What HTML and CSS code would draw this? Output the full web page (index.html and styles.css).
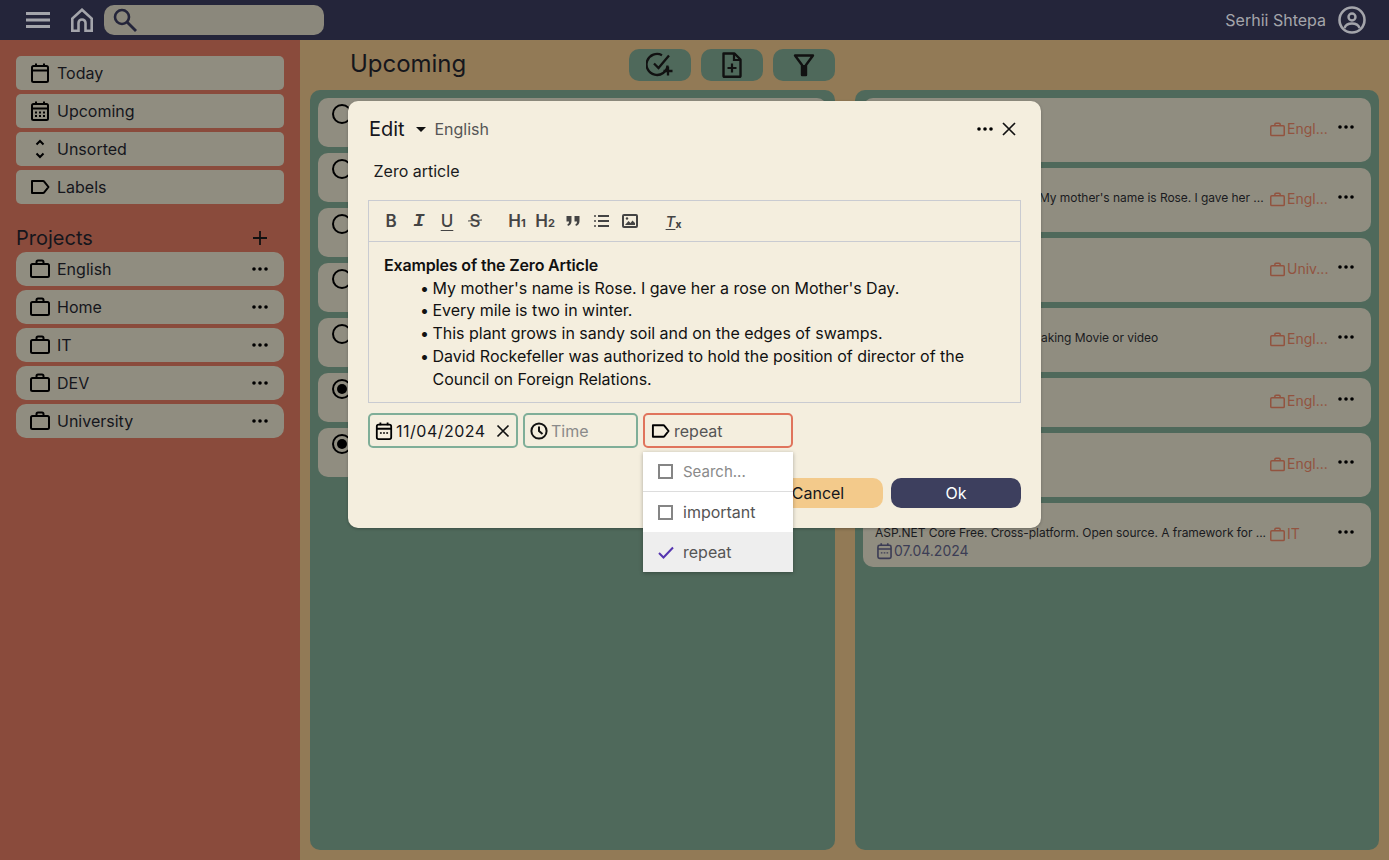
FILE: index.html
```html
<!DOCTYPE html>
<html lang="en">
<head>
<meta charset="utf-8">
<title>Upcoming</title>
<link rel="stylesheet" href="styles.css">
</head>
<body>
<svg class="sprite" aria-hidden="true">
  <symbol id="cal" viewBox="0 0 20 22"><rect x="2" y="4" width="16" height="16" rx="1.500" fill="none" stroke="currentColor" stroke-width="2"/><path d="M2 8.500h16M6 1.500v3M14 1.500v3" fill="none" stroke="currentColor" stroke-width="2"/></symbol>
  <symbol id="cal-dots" viewBox="0 0 20 22"><rect x="2" y="4" width="16" height="16" rx="1.500" fill="none" stroke="currentColor" stroke-width="2"/><path d="M2 8.500h16M6 1.500v3M14 1.500v3" fill="none" stroke="currentColor" stroke-width="2"/><path d="M5 11.500h2v2H5zM9 11.500h2v2H9zM13 11.500h2v2h-2zM5 15h2v2H5zM9 15h2v2H9zM13 15h2v2h-2z" fill="currentColor"/></symbol>
  <symbol id="cal-row" viewBox="0 0 20 22"><rect x="2" y="4" width="16" height="16" rx="2" fill="none" stroke="currentColor" stroke-width="2"/><path d="M2 8.500h16M6 1.500v3M14 1.500v3" fill="none" stroke="currentColor" stroke-width="2"/><path d="M5.500 12.500h2v1.600h-2zM9 12.500h2v1.600H9zM12.500 12.500h2v1.600h-2z" fill="currentColor"/></symbol>
  <symbol id="brief" viewBox="0 0 20 20"><rect x="1" y="5" width="18" height="13" rx="1.500" fill="none" stroke="currentColor" stroke-width="2"/><path d="M6.500 5V3a1.500 1.500 0 0 1 1.500-1.500h4A1.500 1.500 0 0 1 13.500 3v2" fill="none" stroke="currentColor" stroke-width="2"/></symbol>
  <symbol id="tag" viewBox="0 0 20 14"><path d="M2 1h11a1.500 1.500 0 0 1 1.200.6L18.500 7l-4.300 5.400a1.500 1.500 0 0 1-1.200.6H2z" fill="none" stroke="currentColor" stroke-width="2" stroke-linejoin="round"/></symbol>
  <symbol id="dots" viewBox="0 0 16 4"><circle cx="2" cy="2" r="1.800" fill="currentColor"/><circle cx="8" cy="2" r="1.800" fill="currentColor"/><circle cx="14" cy="2" r="1.800" fill="currentColor"/></symbol>
  <symbol id="box" viewBox="0 0 15 15"><rect x="1" y="1" width="13" height="13" fill="none" stroke="#858585" stroke-width="2"/></symbol>
</svg>

<header class="topbar">
  <svg class="burger" viewBox="0 0 24 16"><path d="M0 1.500h24M0 8h24M0 14.500h24" stroke="#a4a5ab" stroke-width="3"/></svg>
  <svg class="home" viewBox="0 0 22 24"><path d="M11 1.700 1.300 10.500V22.700H7.500V15a3.500 3.500 0 0 1 7 0V22.700H20.700V10.500Z" fill="none" stroke="#a4a5ab" stroke-width="2.600"/></svg>
  <div class="search">
    <svg class="search-icon" viewBox="0 0 24 24"><circle cx="9" cy="9" r="7" fill="none" stroke="#24253a" stroke-width="2.600"/><path d="M14 14l9 9" stroke="#24253a" stroke-width="2.800"/></svg>
  </div>
  <div class="user">
    <span>Serhii Shtepa</span>
    <svg class="avatar" viewBox="0 0 28 28"><circle cx="14" cy="14" r="12.500" fill="none" stroke="#a4a5ab" stroke-width="2.600"/><circle cx="14" cy="11" r="3.500" fill="none" stroke="#a4a5ab" stroke-width="2.400"/><path d="M6.500 22c1-3 4-4.500 7.500-4.500s6.500 1.500 7.500 4.500" fill="none" stroke="#a4a5ab" stroke-width="2.400"/></svg>
  </div>
</header>

<div class="shell">
  <aside class="sidebar">
    <nav class="nav">
      <a class="nav-item"><svg class="ico"><use href="#cal"/></svg>Today</a>
      <a class="nav-item"><svg class="ico"><use href="#cal-dots"/></svg>Upcoming</a>
      <a class="nav-item"><svg class="ico" viewBox="0 0 20 22"><path d="M6.500 6.500 10 3l3.500 3.500M6.500 15.500 10 19l3.500-3.500" fill="none" stroke="currentColor" stroke-width="2"/></svg>Unsorted</a>
      <a class="nav-item"><svg class="ico"><use href="#tag"/></svg>Labels</a>
    </nav>
    <div class="projects-head">
      <span>Projects</span>
      <svg class="plus" viewBox="0 0 16 16"><path d="M8 1v14M1 8h14" stroke="#111" stroke-width="1.800"/></svg>
    </div>
    <div class="nav">
      <a class="nav-item round"><svg class="ico"><use href="#brief"/></svg><span class="grow">English</span><svg class="dots"><use href="#dots"/></svg></a>
      <a class="nav-item round"><svg class="ico"><use href="#brief"/></svg><span class="grow">Home</span><svg class="dots"><use href="#dots"/></svg></a>
      <a class="nav-item round"><svg class="ico"><use href="#brief"/></svg><span class="grow">IT</span><svg class="dots"><use href="#dots"/></svg></a>
      <a class="nav-item round"><svg class="ico"><use href="#brief"/></svg><span class="grow">DEV</span><svg class="dots"><use href="#dots"/></svg></a>
      <a class="nav-item round"><svg class="ico"><use href="#brief"/></svg><span class="grow">University</span><svg class="dots"><use href="#dots"/></svg></a>
    </div>
  </aside>

  <main class="main">
    <div class="title-row">
      <h1 class="title">Upcoming</h1>
      <div class="tools">
        <button class="tool"><svg viewBox="0 0 28 26"><path d="M21.500 13.500A10.500 10.500 0 1 1 16 3.200" fill="none" stroke="#111" stroke-width="2.300"/><path d="M8 11.500l4.500 4.500L23 3.500" fill="none" stroke="#111" stroke-width="2.300"/><path d="M22 14.500v9M17.500 19h9" stroke="#111" stroke-width="2.300"/></svg></button>
        <button class="tool"><svg viewBox="0 0 28 26"><path d="M5.500 1.500h11l6 6V24a.8.800 0 0 1-.8.800H6.300a.8.800 0 0 1-.8-.8z" fill="none" stroke="#111" stroke-width="2.400" stroke-linejoin="round"/><path d="M16 1.500V8h6.500" fill="none" stroke="#111" stroke-width="2.200"/><path d="M14 11.500v9M9.500 16h9" stroke="#111" stroke-width="2.200"/></svg></button>
        <button class="tool"><svg viewBox="0 0 28 26"><path d="M5 3.500h18l-7 9.500v10h-4V13z" fill="none" stroke="#111" stroke-width="2.400" stroke-linejoin="round"/><path d="M12 13h4v10h-4z" fill="#111"/></svg></button>
      </div>
    </div>
    <div class="columns">
      <section class="column">
        <div class="task"><span class="radio"></span></div>
        <div class="task"><span class="radio"></span></div>
        <div class="task"><span class="radio"></span></div>
        <div class="task"><span class="radio"></span></div>
        <div class="task"><span class="radio"></span></div>
        <div class="task"><span class="radio on"></span></div>
        <div class="task"><span class="radio on"></span></div>
      </section>
      <section class="column">
        <div class="note tall"><p class="note-text"></p><span class="proj"><svg class="proj-ico"><use href="#brief"/></svg>Engl...</span><svg class="dots"><use href="#dots"/></svg></div>
        <div class="note tall"><p class="note-text"><span class="shift-rose">My mother's name is Rose. I gave her ...</span></p><span class="proj"><svg class="proj-ico"><use href="#brief"/></svg>Engl...</span><svg class="dots"><use href="#dots"/></svg></div>
        <div class="note tall"><p class="note-text"></p><span class="proj"><svg class="proj-ico"><use href="#brief"/></svg>Univ...</span><svg class="dots"><use href="#dots"/></svg></div>
        <div class="note tall"><p class="note-text"><span class="shift-movie">aking Movie or video</span></p><span class="proj"><svg class="proj-ico"><use href="#brief"/></svg>Engl...</span><svg class="dots"><use href="#dots"/></svg></div>
        <div class="note short"><p class="note-text"></p><span class="proj"><svg class="proj-ico"><use href="#brief"/></svg>Engl...</span><svg class="dots"><use href="#dots"/></svg></div>
        <div class="note tall"><p class="note-text"></p><span class="proj"><svg class="proj-ico"><use href="#brief"/></svg>Engl...</span><svg class="dots"><use href="#dots"/></svg></div>
        <div class="note tall">
          <div class="note-body">
            <p class="note-text">ASP.NET Core Free. Cross-platform. Open source. A framework for ...</p>
            <div class="note-date"><svg class="date-ico"><use href="#cal-row"/></svg>07.04.2024</div>
          </div>
          <span class="proj"><svg class="proj-ico"><use href="#brief"/></svg>IT</span><svg class="dots"><use href="#dots"/></svg>
        </div>
      </section>
    </div>
  </main>
</div>

<div class="modal">
  <div class="modal-head">
    <span class="modal-title">Edit</span>
    <svg class="caret" viewBox="0 0 10 5"><path d="M0 0h10L5 5z" fill="#111"/></svg>
    <span class="modal-project">English</span>
    <svg class="dots modal-dots"><use href="#dots"/></svg>
    <svg class="close" viewBox="0 0 14 14"><path d="M1 1l12 12M13 1 1 13" stroke="#111" stroke-width="1.700"/></svg>
  </div>
  <div class="modal-name">Zero article</div>
  <div class="editor">
    <div class="toolbar">
      <span class="tb tb-b">B</span>
      <span class="tb tb-i">I</span>
      <span class="tb tb-u">U</span>
      <span class="tb tb-s">S</span>
      <span class="tb tb-h first-h">H<small>1</small></span>
      <span class="tb tb-h">H<small>2</small></span>
      <span class="tb"><svg viewBox="0 0 18 18"><path d="M2.500 4h5v5c0 2.700-1.300 4.300-3.500 5l-.7-1.500C4.500 12 5 11 5 9.500H2.500zM10.500 4h5v5c0 2.700-1.300 4.300-3.500 5l-.7-1.500c1.200-.5 1.700-1.500 1.700-3h-2.500z" fill="#444"/></svg></span>
      <span class="tb"><svg viewBox="0 0 18 18"><path d="M6 4h11M6 9h11M6 14h11" stroke="#444" stroke-width="2"/><path d="M2 3.200h2v1.600H2zM2 8.200h2v1.600H2zM2 13.200h2v1.600H2z" fill="#444"/></svg></span>
      <span class="tb"><svg viewBox="0 0 18 18"><rect x="3" y="3" width="14" height="12" rx="1" fill="none" stroke="#444" stroke-width="2"/><path d="M5 13l3.500-4 2 2 2-2.500L15 11v2z" fill="#444"/><circle cx="7" cy="6.500" r="1.200" fill="#444"/></svg></span>
      <span class="tb tb-clean"><span class="tb-t">T</span><span class="tb-x">x</span></span>
    </div>
    <div class="editor-body">
      <p class="editor-h">Examples of the Zero Article</p>
      <ul class="editor-list">
        <li>My mother's name is Rose. I gave her a rose on Mother's Day.</li>
        <li>Every mile is two in winter.</li>
        <li>This plant grows in sandy soil and on the edges of swamps.</li>
        <li>David Rockefeller was authorized to hold the position of director of the Council on Foreign Relations.</li>
      </ul>
    </div>
  </div>
  <div class="fields">
    <div class="field field-date"><svg class="f-ico"><use href="#cal-row"/></svg><span class="f-val date-val">11/04/2024</span><svg class="f-x" viewBox="0 0 14 14"><path d="M1.500 1.500l11 11M12.500 1.500l-11 11" stroke="#111" stroke-width="1.700"/></svg></div>
    <div class="field field-time"><svg class="f-clock" viewBox="0 0 18 18"><circle cx="9" cy="9" r="7.600" fill="none" stroke="#111" stroke-width="2"/><path d="M9 4.500V9l3.500 3" fill="none" stroke="#111" stroke-width="2"/></svg><span class="f-ph">Time</span></div>
    <div class="field field-label"><svg class="f-tag"><use href="#tag"/></svg><span class="f-sel">repeat</span></div>
  </div>
  <div class="actions">
    <button class="btn btn-cancel">Cancel</button>
    <button class="btn btn-ok">Ok</button>
  </div>
  <div class="menu">
    <div class="menu-row menu-search"><svg class="check-box"><use href="#box"/></svg><span class="menu-ph">Search...</span></div>
    <div class="menu-row"><svg class="check-box"><use href="#box"/></svg><span>important</span></div>
    <div class="menu-row selected"><svg class="check-mark" viewBox="0 0 16 13"><path d="M1 7l4.500 4.500L15 1.500" fill="none" stroke="#5535b0" stroke-width="2"/></svg><span>repeat</span></div>
  </div>
</div>
</body>
</html>
```
FILE: styles.css
```css
* { box-sizing: border-box; }
html, body { margin: 0; height: 100%; }
body {
  font-family: Inter, "Noto Sans", sans-serif;
  font-size: 16px;
  color: #15161c;
  overflow: hidden;
  background: #927a56;
}
p, ul, h1 { margin: 0; padding: 0; font-weight: 400; }
.sprite { display: none; }

.topbar {
  height: 40px;
  background: #24253a;
  display: flex;
  align-items: center;
  padding: 0 23px 0 26px;
}
.burger { width: 24px; height: 16px; }
.home { width: 22px; height: 24px; margin-left: 21px; }
.search {
  width: 220px;
  height: 30px;
  margin-left: 11px;
  background: #8b887c;
  border-radius: 10px;
  display: flex;
  align-items: center;
  padding-left: 9px;
}
.search-icon { width: 24px; height: 24px; }
.user {
  margin-left: auto;
  display: flex;
  align-items: center;
  gap: 12px;
  color: #a4a5ab;
}
.avatar { width: 28px; height: 28px; }

.shell { display: flex; height: 820px; }
.sidebar {
  width: 300px;
  flex: none;
  background: #8a4b3c;
  padding: 16px 16px 0;
}
.nav { display: flex; flex-direction: column; gap: 4px; }
.nav-item {
  height: 34px;
  background: #908d80;
  border-radius: 5px;
  display: flex;
  align-items: center;
  padding: 0 15px 0 14px;
  color: #15161c;
}
.nav-item.round { border-radius: 10px; }
.ico { width: 20px; height: 22px; margin-right: 7px; color: #000; flex: none; }
.grow { flex: 1; }
.dots { width: 16px; height: 4px; color: #000; flex: none; }
.nav-item .dots { margin-right: 1px; }
.projects-head {
  display: flex;
  align-items: center;
  justify-content: space-between;
  height: 24px;
  margin: 22px 0 2px;
  padding-right: 16px;
  font-size: 20px;
  color: #15161c;
}
.plus { width: 16px; height: 16px; }

.main { flex: 1; display: flex; flex-direction: column; padding: 0 10px 10px; }
.title-row {
  height: 50px;
  width: 525px;
  flex: none;
  display: flex;
  align-items: center;
  justify-content: space-between;
  padding-left: 40px;
}
.title { font-size: 24px; line-height: 30px; margin-top: -2px; letter-spacing: -.03px; color: #15161c; }
.tools { display: flex; gap: 10px; }
.tool {
  width: 62px;
  height: 32px;
  border: 0;
  padding: 0;
  background: #4f695b;
  border-radius: 10px;
  display: flex;
  align-items: center;
  justify-content: center;
}
.tool svg { width: 28px; height: 26px; }

.columns { flex: 1; display: grid; grid-template-columns: 525px 524px; gap: 20px; }
.column {
  background: #4f695b;
  border-radius: 10px;
  padding: 8px;
  display: flex;
  flex-direction: column;
  gap: 6px;
}
.task {
  height: 49px;
  background: #908d80;
  border-radius: 10px;
  padding: 6px 0 0 14px;
}
.radio {
  display: block;
  width: 20px;
  height: 20px;
  border: 2px solid #000;
  border-radius: 50%;
  position: relative;
}
.radio.on::after {
  content: "";
  position: absolute;
  inset: 3px;
  background: #000;
  border-radius: 50%;
}
.note {
  background: #908d80;
  border-radius: 10px;
  display: flex;
  align-items: flex-start;
  padding: 22px 17px 0 12px;
}
.note.tall { height: 64px; }
.note.short { height: 49px; padding-top: 14px; }
.note-text {
  flex: 1;
  min-width: 0;
  font-size: 12px;
  line-height: 16px;
  letter-spacing: -.05px;
  white-space: nowrap;
  color: #1a1b20;
}
.note-body { flex: 1; min-width: 0; }
.shift-rose { margin-left: 164px; }
.shift-movie { margin-left: 166px; }
.note-date {
  display: flex;
  align-items: center;
  gap: 1px;
  font-size: 14px;
  line-height: 18px;
  margin-top: 1px;
  color: #3c3d55;
}
.date-ico { width: 17px; height: 18px; margin-left: 1px; color: #3c3d55; }
.proj {
  width: 68px;
  display: flex;
  align-items: center;
  gap: 2px;
  font-size: 14px;
  line-height: 18px;
  color: #92533f;
  white-space: nowrap;
  flex: none;
  margin-left: 7px;
}
.proj-ico { width: 15px; height: 15px; color: #92533f; flex: none; }
.note > .dots { margin-top: 5px; }

.modal {
  position: absolute;
  left: 348px;
  top: 101px;
  width: 693px;
  height: 427px;
  background: #f4eede;
  border-radius: 10px;
  box-shadow: 0 1px 3px rgba(0, 0, 0, .25);
  padding: 16px 20px 0;
}
.modal-head { display: flex; align-items: center; height: 24px; }
.modal-title { font-size: 20px; margin-left: 1px; letter-spacing: -.05px; color: #15161c; }
.caret { width: 10px; height: 5px; margin-left: 12px; }
.modal-project { margin-left: 8px; color: #555; }
.modal-dots { margin-left: auto; }
.close { width: 14px; height: 14px; margin-left: 9px; margin-right: 5px; }
.modal-name { margin: 19px 0 0 5.500px; line-height: 22px; color: #1a1b20; }

.editor { margin-top: 18px; width: 653px; border: 1px solid #c9cbd1; }
.toolbar {
  height: 41px;
  border-bottom: 1px solid #c9cbd1;
  display: flex;
  align-items: center;
  padding-left: 8px;
  color: #444;
}
.tb {
  width: 28px;
  height: 24px;
  display: flex;
  align-items: center;
  justify-content: center;
  font-size: 17px;
  font-weight: 600;
  color: #444;
}
.tb svg { width: 18px; height: 18px; }
.tb-i { font-style: italic; font-weight: 700; font-size: 19px; font-family: "Liberation Mono", monospace; }
.tb-u { text-decoration: underline; text-decoration-thickness: 1px; text-underline-offset: 3px; font-weight: 500; }
.tb-s { font-weight: 500; position: relative; }
.tb-s::after {
  content: "";
  position: absolute;
  left: 7px;
  right: 7px;
  top: 11px;
  height: 1px;
  background: #444;
  transform: rotate(-4deg);
}
.tb-h { font-size: 17px; }
.first-h { margin-left: 14px; }
.tb-h small { font-size: 11px; font-weight: 700; margin-top: 4px; }
.tb-clean { margin-left: 16px; padding-left: 1px; }
.tb-t { font-style: italic; font-size: 15px; font-weight: 500; text-decoration: underline; text-decoration-thickness: 1px; text-underline-offset: 2px; }
.tb-x { font-size: 10px; font-weight: 800; margin-top: 6px; }

.editor-body { padding: 12px 15px; font-size: 16px; line-height: 22.72px; color: #111; }
.editor-h { font-weight: 600; letter-spacing: -.16px; }
.editor-list { list-style: none; letter-spacing: -.02px; }
.editor-list li { padding-left: 48.500px; position: relative; }
.editor-list li::before {
  content: "\2022";
  position: absolute;
  left: 36px;
}

.fields { display: flex; gap: 5px; margin-top: 10px; }
.field {
  height: 35px;
  border: 2px solid #7fae98;
  border-radius: 5px;
  display: flex;
  align-items: center;
  flex: none;
}
.field-date { width: 150px; padding-left: 5px; }
.field-time { width: 115px; padding-left: 5px; }
.field-label { width: 150px; padding-left: 6px; border-color: #e0745c; }
.f-ico { width: 18px; height: 20px; color: #000; flex: none; }
.date-val { margin-left: 3px; letter-spacing: .5px; color: #15161c; }
.f-x { width: 14px; height: 14px; margin-left: auto; margin-right: 6px; }
.f-clock { width: 18px; height: 18px; }
.f-ph { margin-left: 3px; color: #8a8a8a; }
.f-tag { width: 19px; height: 14px; color: #000; }
.f-sel { margin-left: 4px; color: #555; }

.actions { display: flex; justify-content: flex-end; gap: 8px; margin-top: 30px; }
.btn {
  width: 130px;
  height: 30px;
  border: 0;
  border-radius: 10px;
  font: inherit;
  padding: 0;
}
.btn-cancel { background: #f3ca8b; color: #15161c; }
.btn-ok { background: #3d3f5e; color: #fff; }

.menu {
  position: absolute;
  left: 295px;
  top: 351px;
  width: 150px;
  background: #fff;
  box-shadow: 0 1px 4px rgba(0, 0, 0, .3);
  color: #555;
}
.menu-row {
  height: 40px;
  display: flex;
  align-items: center;
  padding-left: 15px;
}
.menu-search { border-bottom: 1px solid #ddd; }
.menu-ph { color: #8a8a8a; font-size: 15px; }
.check-box { width: 15px; height: 15px; margin-right: 10px; flex: none; }
.check-mark { width: 16px; height: 13px; margin-right: 9px; flex: none; }
.selected { background: #eee; }
```
